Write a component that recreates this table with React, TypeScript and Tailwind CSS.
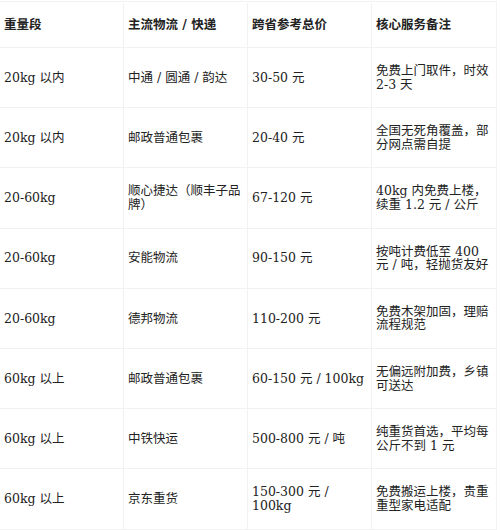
const rows: [string, string, string, string][] = [
  ["20kg 以内", "中通 / 圆通 / 韵达", "30-50 元", "免费上门取件，时效 2-3 天"],
  ["20kg 以内", "邮政普通包裹", "20-40 元", "全国无死角覆盖，部分网点需自提"],
  ["20-60kg", "顺心捷达（顺丰子品牌）", "67-120 元", "40kg 内免费上楼，续重 1.2 元 / 公斤"],
  ["20-60kg", "安能物流", "90-150 元", "按吨计费低至 400 元 / 吨，轻抛货友好"],
  ["20-60kg", "德邦物流", "110-200 元", "免费木架加固，理赔流程规范"],
  ["60kg 以上", "邮政普通包裹", "60-150 元 / 100kg", "无偏远附加费，乡镇可送达"],
  ["60kg 以上", "中铁快运", "500-800 元 / 吨", "纯重货首选，平均每公斤不到 1 元"],
  ["60kg 以上", "京东重货", "150-300 元 / 100kg", "免费搬运上楼，贵重重型家电适配"],
]

const headers = ["重量段", "主流物流 / 快递", "跨省参考总价", "核心服务备注"]

export default function App() {
  return (
    <div className="w-[500px] h-[530px] overflow-hidden bg-white pt-[1px] text-[#222] text-[12.5px] leading-[13.5px] font-['DejaVu_Serif','Noto_Sans_CJK_SC',serif]">
      <div className="w-[497px] border-t border-r border-[#f3f3f3]">
        {/* header */}
        <div className="grid grid-cols-4 h-[46px] pt-[1px] border-b border-[#f2f2f2] font-bold">
          {headers.map((h, i) => (
            <div key={i} className="flex items-center px-[4px] border-r border-[#f2f2f2] last:border-r-0">
              {h}
            </div>
          ))}
        </div>
        {rows.map((r, i) => (
          <div key={i} className="grid grid-cols-4 h-[60.2px] border-b border-[#f2f2f2]">
            {r.map((c, j) => (
              <div key={j} className="flex items-center px-[4px] border-r border-[#f2f2f2] last:border-r-0">
                {c}
              </div>
            ))}
          </div>
        ))}
      </div>
    </div>
  )
}
